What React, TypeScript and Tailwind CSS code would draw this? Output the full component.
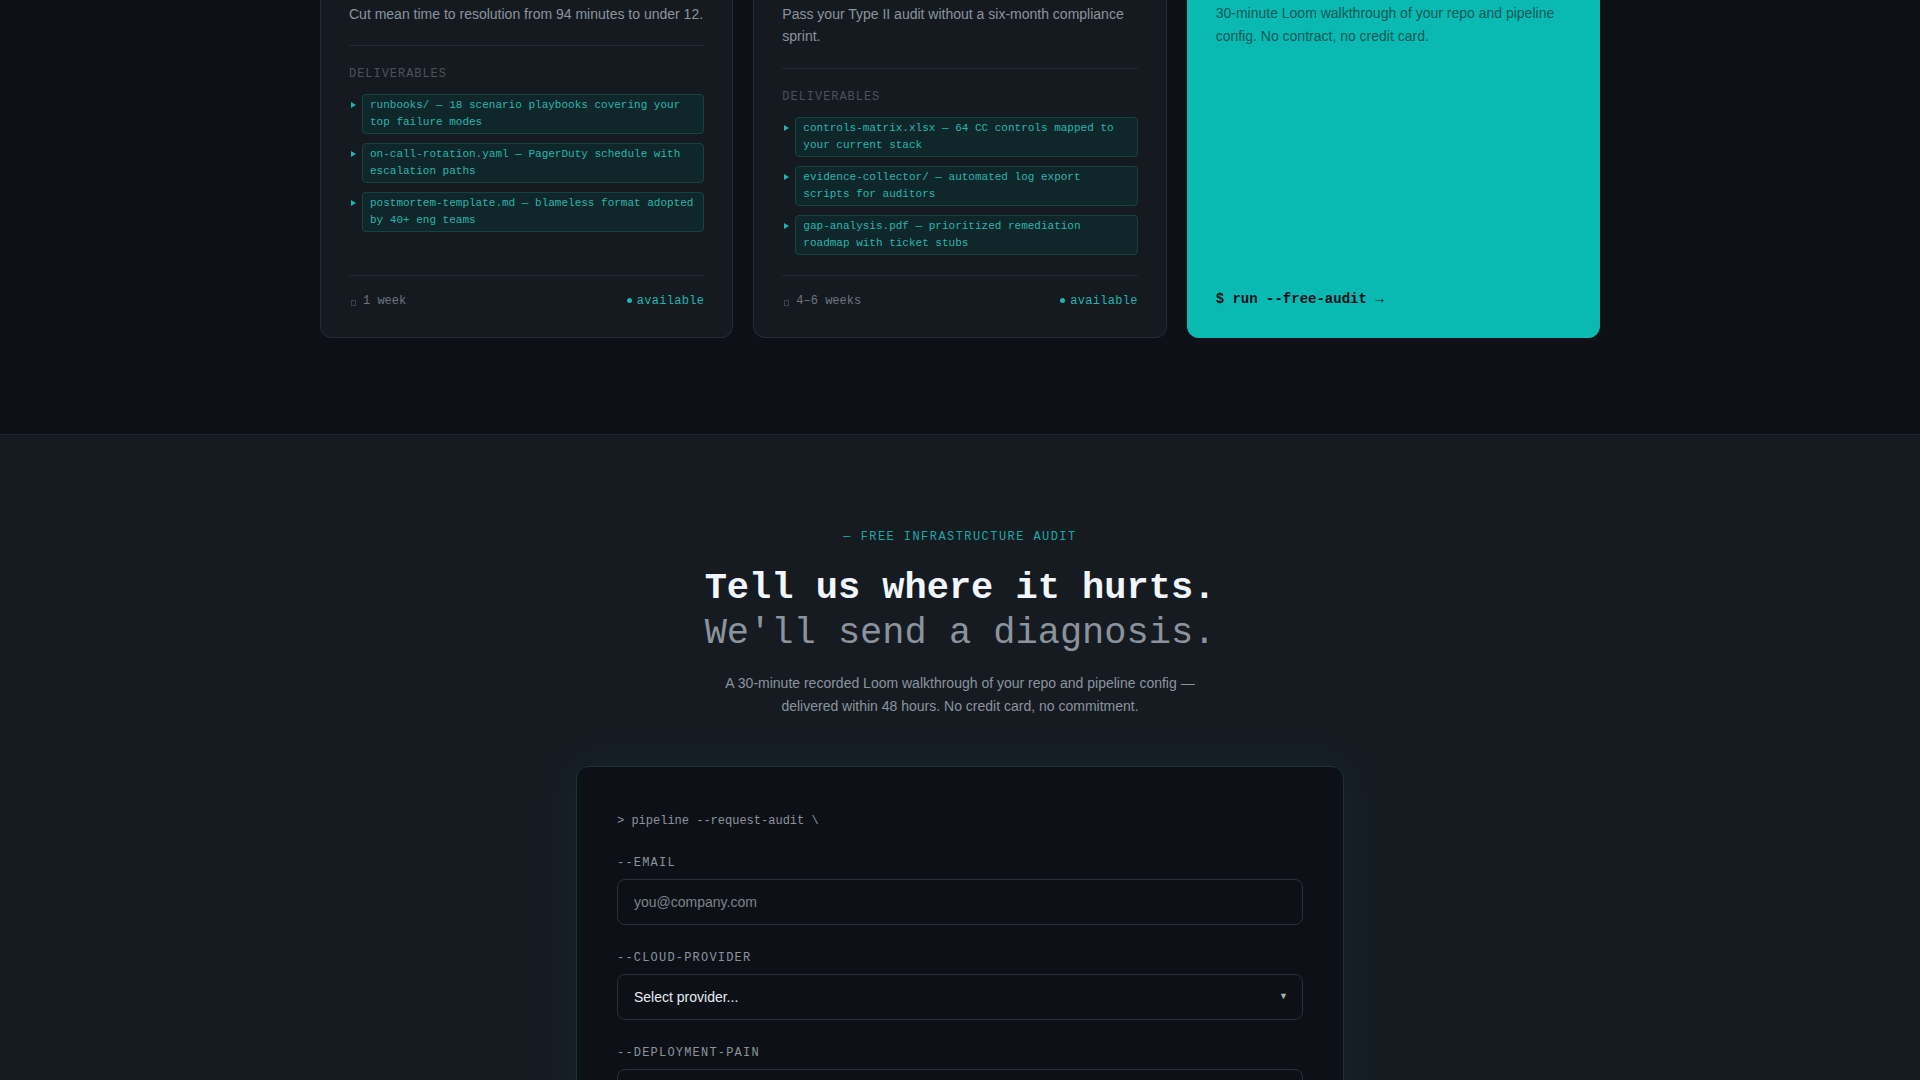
import { ChangeEvent, useState } from 'react';

interface Service {
    desc: string;
    deliverables: string[];
    duration: string;
}

const services: Service[] = [
    {
        desc: 'Cut mean time to resolution from 94 minutes to under 12.',
        deliverables: [
            'runbooks/ — 18 scenario playbooks covering your top failure modes',
            'on-call-rotation.yaml — PagerDuty schedule with escalation paths',
            'postmortem-template.md — blameless format adopted by 40+ eng teams',
        ],
        duration: '1 week',
    },
    {
        desc: 'Pass your Type II audit without a six-month compliance sprint.',
        deliverables: [
            'controls-matrix.xlsx — 64 CC controls mapped to your current stack',
            'evidence-collector/ — automated log export scripts for auditors',
            'gap-analysis.pdf — prioritized remediation roadmap with ticket stubs',
        ],
        duration: '4–6 weeks',
    },
];

const mono = "font-['Liberation_Mono','DejaVu_Sans_Mono',monospace]";

function ServiceCard({ service }: { service: Service }) {
    return (
        <div className="flex flex-col rounded-b-xl border border-t-0 border-[#262c35] bg-[#151a21] px-7 pb-7 pt-[3px]">
            <p className="text-sm leading-[1.6] text-[#8b949e]">{service.desc}</p>

            <div className="mt-5 border-t border-[#232931] pt-5 pb-5">
                <div className={`${mono} text-[12px] leading-4 tracking-[0.08em] text-[#4b525b]`}>
                    DELIVERABLES
                </div>
                <ul className="mt-3 flex flex-col gap-[9px]">
                    {service.deliverables.map((item) => (
                        <li key={item} className="flex items-start">
                            <div className="w-[13px] shrink-0 pl-[2px] pt-[8px]">
                                <svg width="5" height="6" viewBox="0 0 5 6">
                                    <path d="M0 0 L5 3 L0 6 Z" fill="#1fb5ad" />
                                </svg>
                            </div>
                            <div
                                className={`${mono} flex-1 rounded border border-[#17433f] bg-[#0f272a] px-[7px] py-[2px] text-[11px] leading-[17px] text-[#2bb5aa]`}
                            >
                                {item}
                            </div>
                        </li>
                    ))}
                </ul>
            </div>

            <div className={`${mono} mt-auto flex items-center justify-between border-t border-[#232931] pt-[17px] text-[12px] leading-4`}>
                <span className="flex items-center text-[#6e7681]">
                    <span className="ml-[2px] mr-[7px] mt-[4px] inline-block h-[6px] w-[5px] border border-[#3a414a]" />
                    {service.duration}
                </span>
                <span className="flex items-center gap-[5px] tracking-wide text-[#1fb5ad]">
                    <span className="inline-block h-[5px] w-[5px] rounded-full bg-[#1fb5ad]" />
                    available
                </span>
            </div>
        </div>
    );
}

export default function App() {
    const [email, setEmail] = useState('');
    const [provider, setProvider] = useState('');
    const [pain, setPain] = useState('');

    return (
        <div className="min-h-screen bg-[#161b22] font-['Liberation_Sans',Arial,sans-serif]">
            <section className="bg-[#0d1117] pb-24">
                <div className="mx-auto grid max-w-[1280px] grid-cols-3 gap-5">
                    {services.map((s) => (
                        <ServiceCard key={s.duration} service={s} />
                    ))}

                    <div className="flex flex-col rounded-b-xl border border-t-0 border-[#0bb9b3] bg-[#0bb9b3] px-7 pb-7 pt-[2px]">
                        <p className="text-sm leading-[1.65] text-[#0b5a56]">
                            30-minute Loom walkthrough of your repo and pipeline config. No contract, no credit card.
                        </p>
                        <a href="#audit" className={`${mono} mt-auto text-sm font-bold leading-5 text-[#0d1117]`}>
                            $ run --free-audit →
                        </a>
                    </div>
                </div>
            </section>

            <section id="audit" className="border-t border-[#1e242c] bg-[#161b22] px-4 pb-24 pt-[94px]">
                <div className="mx-auto flex max-w-3xl flex-col items-center text-center">
                    <div className={`${mono} mb-[21px] text-[12px] leading-4 tracking-[0.12em] text-[#19a9a1]`}>
                        — FREE INFRASTRUCTURE AUDIT
                    </div>
                    <h2 className={`${mono} text-[37px] leading-[1.22]`}>
                        <span className="block font-bold text-[#f0f6fc]">Tell us where it hurts.</span>
                        <span className="block font-normal text-[#8b949e]">We'll send a diagnosis.</span>
                    </h2>
                    <p className="mt-4 max-w-[500px] text-sm leading-[1.65] text-[#8b949e]">
                        A 30-minute recorded Loom walkthrough of your repo and pipeline config — delivered within 48 hours. No credit card, no commitment.
                    </p>
                </div>

                <form
                    onSubmit={(e) => e.preventDefault()}
                    className="mx-auto mt-12 max-w-3xl rounded-xl border border-[#1b3134] bg-[#0d1117] px-10 pb-10 pt-[46px] shadow-[0_0_48px_rgba(11,185,179,0.07)]"
                >
                    <div className={`${mono} mb-[26px] text-[12px] leading-4 text-[#8b949e]`}>
                        &gt; pipeline --request-audit \
                    </div>

                    <div className="flex flex-col gap-[25px]">
                        <div>
                            <label className={`${mono} mb-2 block text-[12px] leading-4 tracking-[0.1em] text-[#8b949e]`}>
                                --EMAIL
                            </label>
                            <input
                                type="email"
                                value={email}
                                onChange={(e: ChangeEvent<HTMLInputElement>) => setEmail(e.target.value)}
                                placeholder="you@company.com"
                                className="w-full rounded-lg border border-[#2a3038] bg-[#0d1117] px-4 py-3 text-sm leading-5 text-[#e6edf3] placeholder:text-[#7d848c] focus:border-[#0bb9b3] focus:outline-none"
                            />
                        </div>

                        <div>
                            <label className={`${mono} mb-2 block text-[12px] leading-4 tracking-[0.1em] text-[#8b949e]`}>
                                --CLOUD-PROVIDER
                            </label>
                            <div className="relative">
                                <select
                                    value={provider}
                                    onChange={(e: ChangeEvent<HTMLSelectElement>) => setProvider(e.target.value)}
                                    className="w-full appearance-none rounded-lg border border-[#2a3038] bg-[#0d1117] px-4 py-3 text-sm leading-5 text-[#e6edf3] focus:border-[#0bb9b3] focus:outline-none"
                                >
                                    <option value="">Select provider...</option>
                                    <option value="aws">AWS</option>
                                    <option value="gcp">Google Cloud</option>
                                    <option value="azure">Azure</option>
                                    <option value="other">Other</option>
                                </select>
                                <span className="pointer-events-none absolute right-[15px] top-1/2 -translate-y-1/2 text-[9px] text-[#aab1b9]">
                                    ▼
                                </span>
                            </div>
                        </div>

                        <div>
                            <label className={`${mono} mb-2 block text-[12px] leading-4 tracking-[0.1em] text-[#8b949e]`}>
                                --DEPLOYMENT-PAIN
                            </label>
                            <textarea
                                value={pain}
                                onChange={(e: ChangeEvent<HTMLTextAreaElement>) => setPain(e.target.value)}
                                rows={4}
                                placeholder="What breaks, what's slow, what keeps you up at night..."
                                className="w-full resize-none rounded-lg border border-[#2a3038] bg-[#0d1117] px-4 py-3 text-sm leading-5 text-[#e6edf3] placeholder:text-[#7d848c] focus:border-[#0bb9b3] focus:outline-none"
                            />
                        </div>

                        <button
                            type="submit"
                            className={`${mono} w-full rounded-lg bg-[#0bb9b3] py-3 text-sm font-bold text-[#0d1117]`}
                        >
                            $ submit --request-audit →
                        </button>
                    </div>
                </form>
            </section>
        </div>
    );
}
